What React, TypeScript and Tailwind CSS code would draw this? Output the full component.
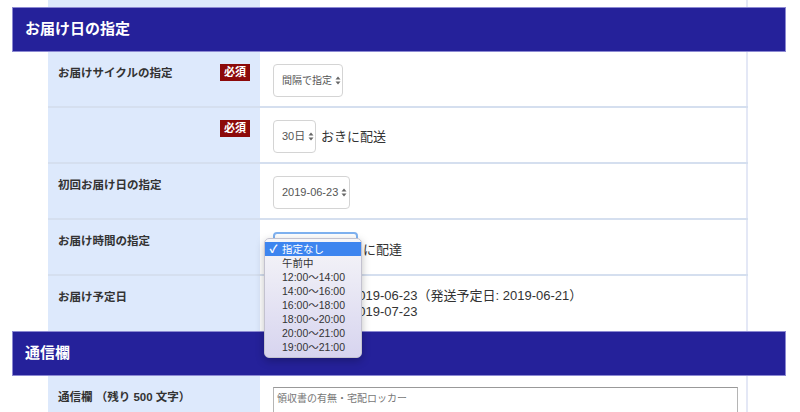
import React from "react";

const font = { fontFamily: '"Liberation Sans", "Noto Sans CJK JP", sans-serif' };

function Arrows() {
  return (
    <svg width="6" height="9" viewBox="0 0 6 9" className="ml-[3px] shrink-0">
      <path d="M3 0.5 L5.5 3.5 L0.5 3.5 Z" fill="#666" />
      <path d="M3 8.5 L5.5 5.5 L0.5 5.5 Z" fill="#666" />
    </svg>
  );
}

function Select({ label, w, text = "text-[11px]", focus }: { label: string; w: string; text?: string; focus?: boolean }) {
  return (
    <div
      className={`${w} h-[33px] rounded-[4px] bg-white flex items-center pl-[8px] pr-[4px] ${text} text-[#555] ${
        focus ? "border-2 border-[#7fb2f0]" : "border border-[#d4d4d4]"
      }`}
    >
      <span className="flex-1 whitespace-nowrap">{label}</span>
      <Arrows />
    </div>
  );
}

function Badge() {
  return (
    <span className="inline-flex items-center justify-center w-[30px] h-[17px] bg-[#8c0a0a] text-white text-[11px] font-bold">
      必須
    </span>
  );
}

function Row({
  label,
  badge,
  children,
  last,
}: {
  label?: string;
  badge?: boolean;
  children: React.ReactNode;
  last?: boolean;
}) {
  return (
    <div className={`flex ${last ? "h-[55px]" : "h-[56px] border-b-2 border-[#d5dfef]"}`}>
      <div className="w-[212px] shrink-0 bg-[#dde9fc] flex justify-between items-start pl-[10px] pr-[10px] pt-[12px]">
        <span className="text-[11.5px] font-bold text-[#333] leading-[18px]">{label}</span>
        {badge && <Badge />}
      </div>
      <div className="flex-1 border-r-2 border-[#e4e8f6] pl-[13px] pt-[12px]">{children}</div>
    </div>
  );
}

function Header({ title }: { title: string }) {
  return (
    <div className="ml-[12px] w-[774px] h-[45px] bg-[#25219a] border border-[#8c89d2] flex items-center pl-[12px]">
      <span className="text-white text-[15px] font-bold">{title}</span>
    </div>
  );
}

const times = [
  "午前中",
  "12:00〜14:00",
  "14:00〜16:00",
  "16:00〜18:00",
  "18:00〜20:00",
  "20:00〜21:00",
  "19:00〜21:00",
];

export default function App() {
  return (
    <div className="w-[800px] h-[412px] overflow-hidden bg-white relative" style={font}>
      {/* previous section tail */}
      <div className="ml-[48px] w-[700px] h-[7px] flex">
        <div className="w-[212px] bg-[#dde9fc]" />
        <div className="flex-1 border-r-2 border-[#e4e8f6]" />
      </div>

      <Header title="お届け日の指定" />

      <div className="ml-[48px] w-[700px]">
        <Row label="お届けサイクルの指定" badge>
          <Select label="間隔で指定" w="w-[70px]" text="text-[10px]" />
        </Row>
        <Row badge>
          <div className="flex items-center gap-[5px]">
            <Select label="30日" w="w-[43px]" />
            <span className="text-[13px] text-[#333]">おきに配送</span>
          </div>
        </Row>
        <Row label="初回お届け日の指定">
          <Select label="2019-06-23" w="w-[77px]" />
        </Row>
        <Row label="お届け時間の指定">
          <div className="flex items-center gap-[5px]">
            <Select label="指定なし" w="w-[85px]" focus />
            <span className="text-[13px] text-[#333] pt-[2px]">に配達</span>
          </div>
        </Row>
        <Row label="お届け予定日" last>
          <div className="text-[13px] text-[#333] leading-[16px]">
            <div>初回お届け：2019-06-23（発送予定日: 2019-06-21）</div>
            <div>次回お届け：2019-07-23</div>
          </div>
        </Row>
      </div>

      <Header title="通信欄" />

      <div className="ml-[48px] w-[700px]">
        <div className="flex h-[60px]">
          <div className="w-[212px] shrink-0 bg-[#dde9fc] pl-[10px] pt-[8px]">
            <span className="text-[11.5px] font-bold text-[#333] leading-[18px]">通信欄 （残り 500 文字）</span>
          </div>
          <div className="flex-1 border-r-2 border-[#e4e8f6] pl-[13px] pr-[8px] pt-[11px]">
            <div className="h-[60px] border border-[#b5b5b5] border-t-[#999] px-[3px] pt-[3px] text-[10px] text-[#777]">
              領収書の有無・宅配ロッカー
            </div>
          </div>
        </div>
      </div>

      {/* open time dropdown */}
      <div className="absolute left-[264px] top-[238px] w-[98px] rounded-[5px] border border-[#c3c2cf] bg-gradient-to-b from-[#f6f6f8] to-[#d7d4ef] shadow-[0_3px_8px_rgba(0,0,0,0.25)] py-[3px]">
        <div className="h-[14px] bg-[#3d85ef] text-white flex items-center text-[10.5px] leading-[14px]">
          <span className="w-[17px] text-center text-[11px] font-bold">✓</span>
          <span>指定なし</span>
        </div>
        {times.map((t) => (
          <div key={t} className="h-[14px] pl-[17px] text-[10.5px] leading-[14px] text-[#333]">
            {t}
          </div>
        ))}
      </div>
    </div>
  );
}
